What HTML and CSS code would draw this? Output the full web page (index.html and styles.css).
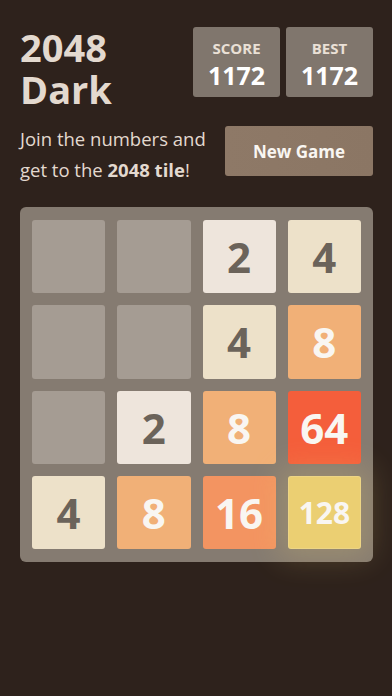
FILE: index.html
```html
<!DOCTYPE html>
<html>
<head>
<meta charset="utf-8">
<link rel="stylesheet" href="styles.css">
</head>
<body>
<div class="page">
  <div class="header">
    <h1 class="title">2048<br>Dark</h1>
    <div class="scores">
      <div class="score-box"><div class="label">SCORE</div><div class="value">1172</div></div>
      <div class="score-box"><div class="label">BEST</div><div class="value">1172</div></div>
    </div>
  </div>
  <div class="intro">
    <p class="subtitle">Join the numbers and get to the <strong>2048 tile</strong>!</p>
    <div class="new-game">New Game</div>
  </div>
  <div class="board">
    <div class="cell"></div>
    <div class="cell"></div>
    <div class="cell t2">2</div>
    <div class="cell t4">4</div>
    <div class="cell"></div>
    <div class="cell"></div>
    <div class="cell t4">4</div>
    <div class="cell t8">8</div>
    <div class="cell"></div>
    <div class="cell t2">2</div>
    <div class="cell t8">8</div>
    <div class="cell t64">64</div>
    <div class="cell t4">4</div>
    <div class="cell t8">8</div>
    <div class="cell t16">16</div>
    <div class="cell t128">128</div>
  </div>
</div>
</body>
</html>
```
FILE: styles.css
```css
* { box-sizing: border-box; }
html, body { margin: 0; padding: 0; }
body {
  background: #2e221c;
  font-family: "Open Sans", "DejaVu Sans", sans-serif;
  width: 392px;
  height: 696px;
  overflow: hidden;
}
.page {
  padding: 27px 19px 0 20px;
}
.header {
  display: flex;
  justify-content: space-between;
  align-items: flex-start;
}
.title {
  margin: -1px 0 0 0;
  font-size: 38px;
  line-height: 42px;
  font-weight: 700;
  color: #e3d9cf;
}
.scores {
  display: flex;
  gap: 6px;
}
.score-box {
  width: 87px;
  height: 70px;
  background: #80766d;
  border-radius: 3px;
  text-align: center;
  padding-top: 12px;
}
.label {
  font-size: 15px;
  line-height: 18px;
  font-weight: 700;
  color: #eae0d6;
}
.value {
  margin-top: 3px;
  font-size: 25px;
  line-height: 30px;
  font-weight: 700;
  color: #ffffff;
}
.intro {
  margin-top: 13px;
  display: flex;
  justify-content: space-between;
  align-items: center;
}
.subtitle {
  margin: 0;
  width: 200px;
  font-size: 18.5px;
  line-height: 31px;
  color: #e3d9cf;
}
.subtitle strong { font-weight: 700; }
.new-game {
  width: 148px;
  height: 50px;
  margin-top: -6px;
  border-radius: 3px;
  background: linear-gradient(90deg, #8e7967, #8b7664);
  color: #f9f6f2;
  font-size: 17px;
  font-weight: 700;
  display: flex;
  align-items: center;
  justify-content: center;
}
.board {
  margin-top: 22px;
  width: 353px;
  height: 355px;
  background: #857b71;
  border-radius: 6px;
  padding: 13px 12px 13px 12px;
  display: grid;
  grid-template-columns: repeat(4, 1fr);
  grid-template-rows: repeat(4, 1fr);
  gap: 12px;
}
.cell {
  background: #a59c93;
  border-radius: 3px;
  display: flex;
  align-items: center;
  justify-content: center;
  font-size: 42px;
  font-weight: 700;
  color: #f9f6f2;
}
.t2 { background: #eee5dc; color: #6b635a; }
.t4 { background: #ede1c9; color: #6b635a; }
.t8 { background: #f1b077; }
.t16 { background: #f39461; }
.t64 { background: #f45e3b; }
.t128 {
  background: #ebcf72;
  font-size: 30px;
  box-shadow: 0 0 30px 10px rgba(243, 215, 116, 0.2), inset 0 0 0 1px rgba(255, 255, 255, 0.14);
}
```
